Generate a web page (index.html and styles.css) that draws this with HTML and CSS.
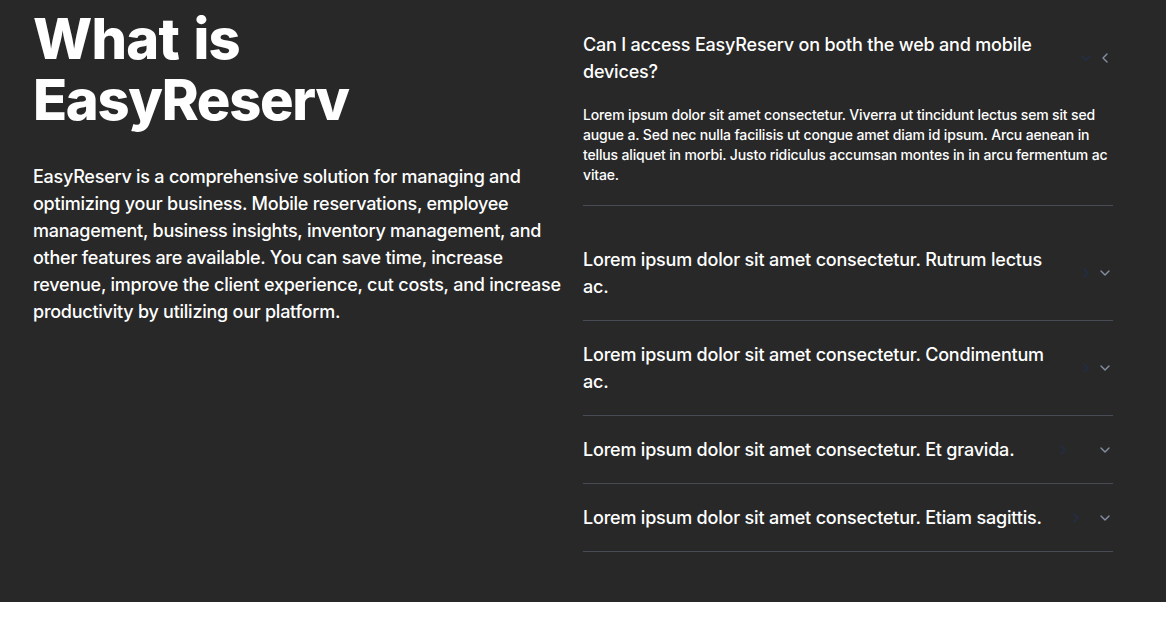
FILE: index.html
```html
<!DOCTYPE html>
<html lang="en">
<head>
<meta charset="utf-8">
<title>What is EasyReserv</title>
<link rel="stylesheet" href="styles.css">
</head>
<body>
<section class="about">
  <div class="container">
    <div class="intro">
      <h2 class="title"><span class="t-line">What is</span> <span class="t-line">EasyReserv</span></h2>
      <p class="lead">EasyReserv is a comprehensive solution for managing and optimizing your business. Mobile reservations, employee management, business insights, inventory management, and other features are available. You can save time, increase revenue, improve the client experience, cut costs, and increase productivity by utilizing our platform.</p>
    </div>
    <div class="faq">
      <div class="item open">
        <div class="q">
          <span class="q-text">Can I access EasyReserv on both the web and mobile devices?</span>
          <svg class="ico dark" viewBox="0 0 24 24"><path d="m6 9 6 6 6-6"/></svg>
          <svg class="ico light" viewBox="0 0 24 24"><path d="m15 18-6-6 6-6"/></svg>
        </div>
        <p class="ans">Lorem ipsum dolor sit amet consectetur. Viverra ut tincidunt lectus sem sit sed augue a. Sed nec nulla facilisis ut congue amet diam id ipsum. Arcu aenean in tellus aliquet in morbi. Justo ridiculus accumsan montes in in arcu fermentum ac vitae.</p>
      </div>
      <div class="item">
        <div class="q">
          <span class="q-text">Lorem ipsum dolor sit amet consectetur. Rutrum lectus ac.</span>
          <svg class="ico dark" viewBox="0 0 24 24"><path d="m9 18 6-6-6-6"/></svg>
          <svg class="ico light" viewBox="0 0 24 24"><path d="m6 9 6 6 6-6"/></svg>
        </div>
      </div>
      <div class="item">
        <div class="q">
          <span class="q-text">Lorem ipsum dolor sit amet consectetur. Condimentum ac.</span>
          <svg class="ico dark" viewBox="0 0 24 24"><path d="m9 18 6-6-6-6"/></svg>
          <svg class="ico light" viewBox="0 0 24 24"><path d="m6 9 6 6 6-6"/></svg>
        </div>
      </div>
      <div class="item">
        <div class="q">
          <span class="q-text">Lorem ipsum dolor sit amet consectetur. Et gravida.</span>
          <svg class="ico dark" viewBox="0 0 24 24"><path d="m9 18 6-6-6-6"/></svg>
          <svg class="ico light" viewBox="0 0 24 24"><path d="m6 9 6 6 6-6"/></svg>
        </div>
      </div>
      <div class="item">
        <div class="q">
          <span class="q-text">Lorem ipsum dolor sit amet consectetur. Etiam sagittis.</span>
          <svg class="ico dark" viewBox="0 0 24 24"><path d="m9 18 6-6-6-6"/></svg>
          <svg class="ico light" viewBox="0 0 24 24"><path d="m6 9 6 6 6-6"/></svg>
        </div>
      </div>
    </div>
  </div>
</section>
</body>
</html>
```

FILE: styles.css
```css
* { box-sizing: border-box; }
html, body { margin: 0; padding: 0; background: #ffffff; }
body { font-family: Inter, "Noto Sans", sans-serif; color: #ffffff; }

.about {
  background: #282828;
  height: 602px;
  padding: 9px 0 0 33px;
}
.container {
  display: flex;
  gap: 20px;
  width: 1080px;
}
.intro { width: 530px; flex: none; }
.title {
  margin: 0;
  font-size: 56px;
  line-height: 61px;
  font-weight: 800;
  letter-spacing: -1.3px;
}
.t-line { display: block; }
.t-line:first-child { letter-spacing: -0.8px; word-spacing: 3px; }
.lead {
  margin: 32px 0 0;
  font-size: 18px;
  line-height: 27px;
  font-weight: 500;
  letter-spacing: -0.25px;
}
.faq { width: 530px; flex: none; padding-top: 2px; }
.item {
  border-bottom: 1px solid #474b53;
  padding: 20px 0;
}
.item.open { margin-bottom: 20px; }
.q {
  display: flex;
  align-items: center;
  justify-content: space-between;
}
.q-text {
  max-width: 478px;
  font-size: 18px;
  line-height: 27px;
  font-weight: 500;
  letter-spacing: -0.2px;
}
.ico {
  width: 16px;
  height: 16px;
  flex: none;
  fill: none;
  stroke-width: 2;
  stroke-linecap: round;
  stroke-linejoin: round;
}
.ico.dark { stroke: #222d4a; }
.ico.light { stroke: #8690a4; margin-left: -14px; }
.ans {
  margin: 20px 0 0;
  font-size: 14px;
  line-height: 20px;
  font-weight: 500;
  letter-spacing: -0.15px;
}
```
